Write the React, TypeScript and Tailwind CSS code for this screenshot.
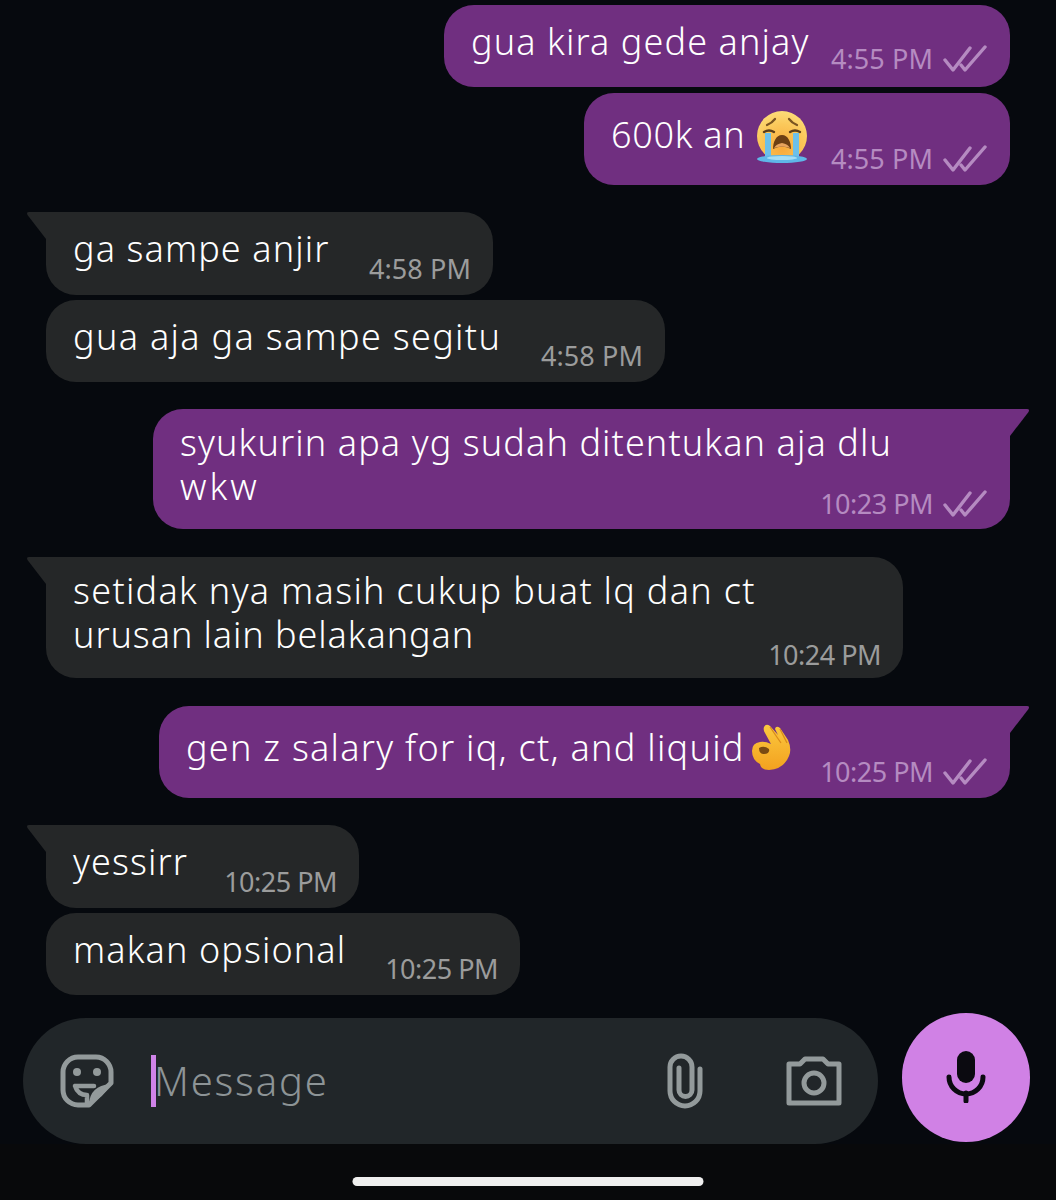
import React from "react";

const Checks = () => (
  <svg width="44" height="28" viewBox="0 0 44 28" fill="none" stroke="#b58bc1" strokeWidth="3.4" strokeLinecap="round" strokeLinejoin="round" className="ml-[10px] mb-[1px]">
    <path d="M2 15 L10 25 L27 3" />
    <path d="M18 20 L22 25 L42 2" />
  </svg>
);

const Crying = () => (
  <svg width="54" height="54" viewBox="0 0 54 54" className="block">
    <defs>
      <radialGradient id="cf" cx="0.5" cy="0.75" r="0.8">
        <stop offset="0" stopColor="#f9a93a" />
        <stop offset="0.6" stopColor="#fbc85a" />
        <stop offset="1" stopColor="#fde07e" />
      </radialGradient>
    </defs>
    <circle cx="27" cy="26" r="25" fill="url(#cf)" />
    <path d="M12 15 Q17 13 20 9" stroke="#7a5420" strokeWidth="2.2" fill="none" strokeLinecap="round" />
    <path d="M42 15 Q37 13 34 9" stroke="#7a5420" strokeWidth="2.2" fill="none" strokeLinecap="round" />
    <path d="M9 22 Q14 19 19 22" stroke="#5a3d1a" strokeWidth="2.4" fill="none" strokeLinecap="round" />
    <path d="M35 22 Q40 19 45 22" stroke="#5a3d1a" strokeWidth="2.4" fill="none" strokeLinecap="round" />
    <path d="M27 25 C21 25 18 32 18 39 Q27 34 36 39 C36 32 33 25 27 25Z" fill="#6d3f14" />
    <path d="M27 33 Q21 34 19 38 Q27 35 35 38 Q33 34 27 33Z" fill="#e8a35e" />
    <path d="M10 23 H16 V46 H10Z" fill="#6cc0ea" />
    <path d="M38 23 H44 V46 H38Z" fill="#6cc0ea" />
    <ellipse cx="27" cy="49" rx="25" ry="4" fill="#5fb7e8" />
    <ellipse cx="27" cy="48" rx="15" ry="2" fill="#a4ddf5" />
  </svg>
);

const OkHand = () => (
  <svg width="40" height="48" viewBox="0 0 40 48" className="block">
    <defs>
      <linearGradient id="ok" x1="0" y1="0" x2="0" y2="1">
        <stop offset="0" stopColor="#fbc93f" />
        <stop offset="1" stopColor="#f3a11f" />
      </linearGradient>
    </defs>
    <path d="M13 4 Q15 0 19 3 L27 12 L24 6 Q25 2 29 5 L37 17 Q41 26 38 33 Q33 46 18 47 Q10 47 9 41 Q1 37 1 28 Q1 20 9 19 Q14 18 20 21 L14 10 Q12 7 13 4Z" fill="url(#ok)" />
    <path d="M8 25 Q13 22 18 26 Q19 31 13 31 Q8 31 8 25Z" fill="#7a4a12" />
    <path d="M19 4 L30 20" stroke="#d98a1b" strokeWidth="1.2" fill="none" />
    <path d="M29 6 L36 20" stroke="#d98a1b" strokeWidth="1.2" fill="none" />
  </svg>
);

const TailLeft = () => (
  <svg width="21" height="28" viewBox="0 0 21 28" className="absolute -left-[20px] top-0" fill="#252728">
    <path d="M20 0 H3 Q0 0 1.5 3 L20 27Z" />
  </svg>
);
const TailRight = () => (
  <svg width="21" height="28" viewBox="0 0 21 28" className="absolute -right-[20px] top-0" fill="#702f80">
    <path d="M1 0 H18 Q21 0 19.5 3 L1 27Z" />
  </svg>
);

type Msg = {
  side: "l" | "r";
  lines: React.ReactNode[];
  time: string;
  tail?: boolean;
  tall?: boolean;
  w: string;
  mt: string;
};

const msgs: Msg[] = [
  { side: "r", lines: ["gua kira gede anjay"], time: "4:55 PM", w: "w-[566px]", mt: "mt-0" },
  {
    side: "r",
    lines: [
      <span className="flex items-start h-[44px]">
        <span className="tracking-[0.7px]">600k an</span>
        <span className="ml-[10px] -mt-[3px]"><Crying /></span>
      </span>,
    ],
    time: "4:55 PM",
    tall: true,
    w: "w-[426px]",
    mt: "mt-[6px]",
  },
  { side: "l", lines: ["ga sampe anjir"], time: "4:58 PM", tail: true, w: "w-[447px]", mt: "mt-[27px]" },
  { side: "l", lines: [<span className="tracking-[1.32px]">gua aja ga sampe segitu</span>], time: "4:58 PM", w: "w-[619px]", mt: "mt-[5px]" },
  { side: "r", lines: ["syukurin apa yg sudah ditentukan aja dlu", <span className="tracking-[3px]">wkw</span>], time: "10:23 PM", tail: true, w: "w-[857px]", mt: "mt-[27px]" },
  {
    side: "l",
    lines: [
      <span className="tracking-[1.31px]">setidak nya masih cukup buat lq dan ct</span>,
      <span className="tracking-[0.92px]">urusan lain belakangan</span>,
    ],
    time: "10:24 PM",
    tail: true,
    w: "w-[857px]",
    mt: "mt-[28px]",
  },
  {
    side: "r",
    lines: [
      <span className="flex items-start h-[44px]">
        <span className="tracking-[1.27px]">gen z salary for iq, ct, and liquid</span>
        <span className="ml-[6px] -mt-[3px]"><OkHand /></span>
      </span>,
    ],
    time: "10:25 PM",
    tail: true,
    tall: true,
    w: "w-[851px]",
    mt: "mt-[28px]",
  },
  { side: "l", lines: ["yessirr"], time: "10:25 PM", tail: true, w: "w-[313px]", mt: "mt-[27px]" },
  { side: "l", lines: ["makan opsional"], time: "10:25 PM", w: "w-[474px]", mt: "mt-[5px]" },
];

const Bubble = ({ m }: { m: Msg }) => {
  const right = m.side === "r";
  const two = m.lines.length > 1;
  const leftTail = !right && m.tail;
  const radius = m.tail
    ? right
      ? "rounded-[30px] rounded-tr-none"
      : "rounded-[30px] rounded-tl-none"
    : "rounded-[30px]";
  const bg = right ? "bg-[#702f80]" : "bg-[#252728]";
  const timeColor = right ? "text-[#b58bc1]" : "text-[#9b9c9c]";
  const singlePad = m.tall
    ? "pt-[20px] pb-[11px]"
    : right
      ? "pt-[15px] pb-[13px]"
      : "pt-[15px] pb-[11px]";
  const singleGap = m.tall
    ? "mb-[17px]"
    : right
      ? "mb-[10px]"
      : leftTail
        ? "mb-[13px]"
        : "mb-[12px]";
  const time = (
    <div className={`flex items-center h-[30px] shrink-0 text-[27px] leading-[30px] ${m.time.length > 7 ? "tracking-[-0.5px]" : "tracking-[0.1px]"} ${timeColor}`}>
      {m.time}
      {right && <Checks />}
    </div>
  );
  return (
    <div className={`relative ${m.w} ${m.mt} ${radius} ${bg} ${right ? "self-end" : "self-start"} text-white`}>
      {m.tail && (right ? <TailRight /> : <TailLeft />)}
      {two ? (
        <div className={`pl-[27px] ${right ? "pr-[23px] pb-[10px]" : "pr-[22px] pb-[8px]"} pt-[12px]`}>
          <div className="text-[36px] leading-[44px] tracking-[1.1px] font-[350]">
            {m.lines.map((l, i) => (
              <div key={i}>{l}</div>
            ))}
          </div>
          <div className={`flex justify-end ${right ? "-mt-[20px]" : "-mt-[17px]"}`}>{time}</div>
        </div>
      ) : (
        <div className={`flex items-end justify-between pl-[27px] ${right ? "pr-[23px]" : "pr-[22px]"} ${singlePad}`}>
          <div className={`text-[36px] leading-[44px] tracking-[1.1px] font-[350] ${singleGap}`}>
            {m.lines[0]}
          </div>
          {time}
        </div>
      )}
    </div>
  );
};

export default function App() {
  return (
    <div className="w-[1056px] h-[1200px] flex flex-col overflow-hidden bg-[#06090e] font-['Noto_Sans',sans-serif]">
      <div className="flex flex-col px-[46px] pt-[5px] h-[1013px]">
        {msgs.map((m, i) => (
          <Bubble key={i} m={m} />
        ))}
      </div>
      <div className="flex items-start pl-[23px] pr-[26px] gap-[24px]">
        <div className="mt-[5px] w-[855px] h-[126px] rounded-[63px] bg-[#212629] flex items-center pl-[37px] pr-[36px]">
          <svg width="54" height="54" viewBox="0 0 54 54" fill="none" stroke="#939a9b" strokeWidth="5" strokeLinecap="round" strokeLinejoin="round" className="shrink-0">
            <path d="M18 3 H36 A15 15 0 0 1 51 18 V29 L29 51 H18 A15 15 0 0 1 3 36 V18 A15 15 0 0 1 18 3Z" />
            <circle cx="17" cy="18" r="4" fill="#939a9b" stroke="none" />
            <circle cx="37" cy="18" r="4" fill="#939a9b" stroke="none" />
            <path d="M15 32 H34 M15 32 Q18 41 27 41 M27 41 V50" strokeWidth="4.5" />
            <path d="M29 50 Q30 32 50 30 Q44 44 29 50Z" fill="#939a9b" stroke="none" />
          </svg>
          <div className="ml-[37px] w-[5px] h-[52px] bg-[#cf83e8] shrink-0" />
          <div className="text-[40px] leading-[52px] tracking-[1.8px] font-[350] text-[#8d9496] flex-1 -ml-[2px]">Message</div>
          <svg width="36" height="56" viewBox="0 0 36 56" fill="none" stroke="#939a9b" strokeWidth="5" strokeLinecap="round" className="shrink-0 mr-[83px]">
            <path d="M33 16 V38 A15 15 0 0 1 3 38 V14 A11 11 0 0 1 25 14 V37 A6.5 6.5 0 0 1 12 37 V15" />
          </svg>
          <svg width="56" height="50" viewBox="0 0 56 50" fill="none" stroke="#939a9b" strokeWidth="5" strokeLinejoin="round" className="shrink-0">
            <path d="M3 8 H14 L19 3 H37 L42 8 H53 V47 H3Z" />
            <circle cx="28" cy="27" r="10" />
          </svg>
        </div>
        <div className="w-[128px] h-[129px] rounded-full bg-[#d081e5] flex items-center justify-center shrink-0">
          <svg width="40" height="52" viewBox="0 0 40 52" fill="none" className="-mt-[1px]">
            <rect x="11" y="0" width="18" height="32" rx="9" fill="#0b0a10" />
            <path d="M3 26 A17 17 0 0 0 37 26" stroke="#0b0a10" strokeWidth="5" strokeLinecap="round" />
            <path d="M20 42 V50" stroke="#0b0a10" strokeWidth="5" strokeLinecap="round" />
          </svg>
        </div>
      </div>
      <div className="flex-1 bg-[#08090b] flex justify-center items-start">
        <div className="mt-[33px] w-[351px] h-[9px] rounded-full bg-[#efefef] -translate-x-[0.5px]" />
      </div>
    </div>
  );
}
